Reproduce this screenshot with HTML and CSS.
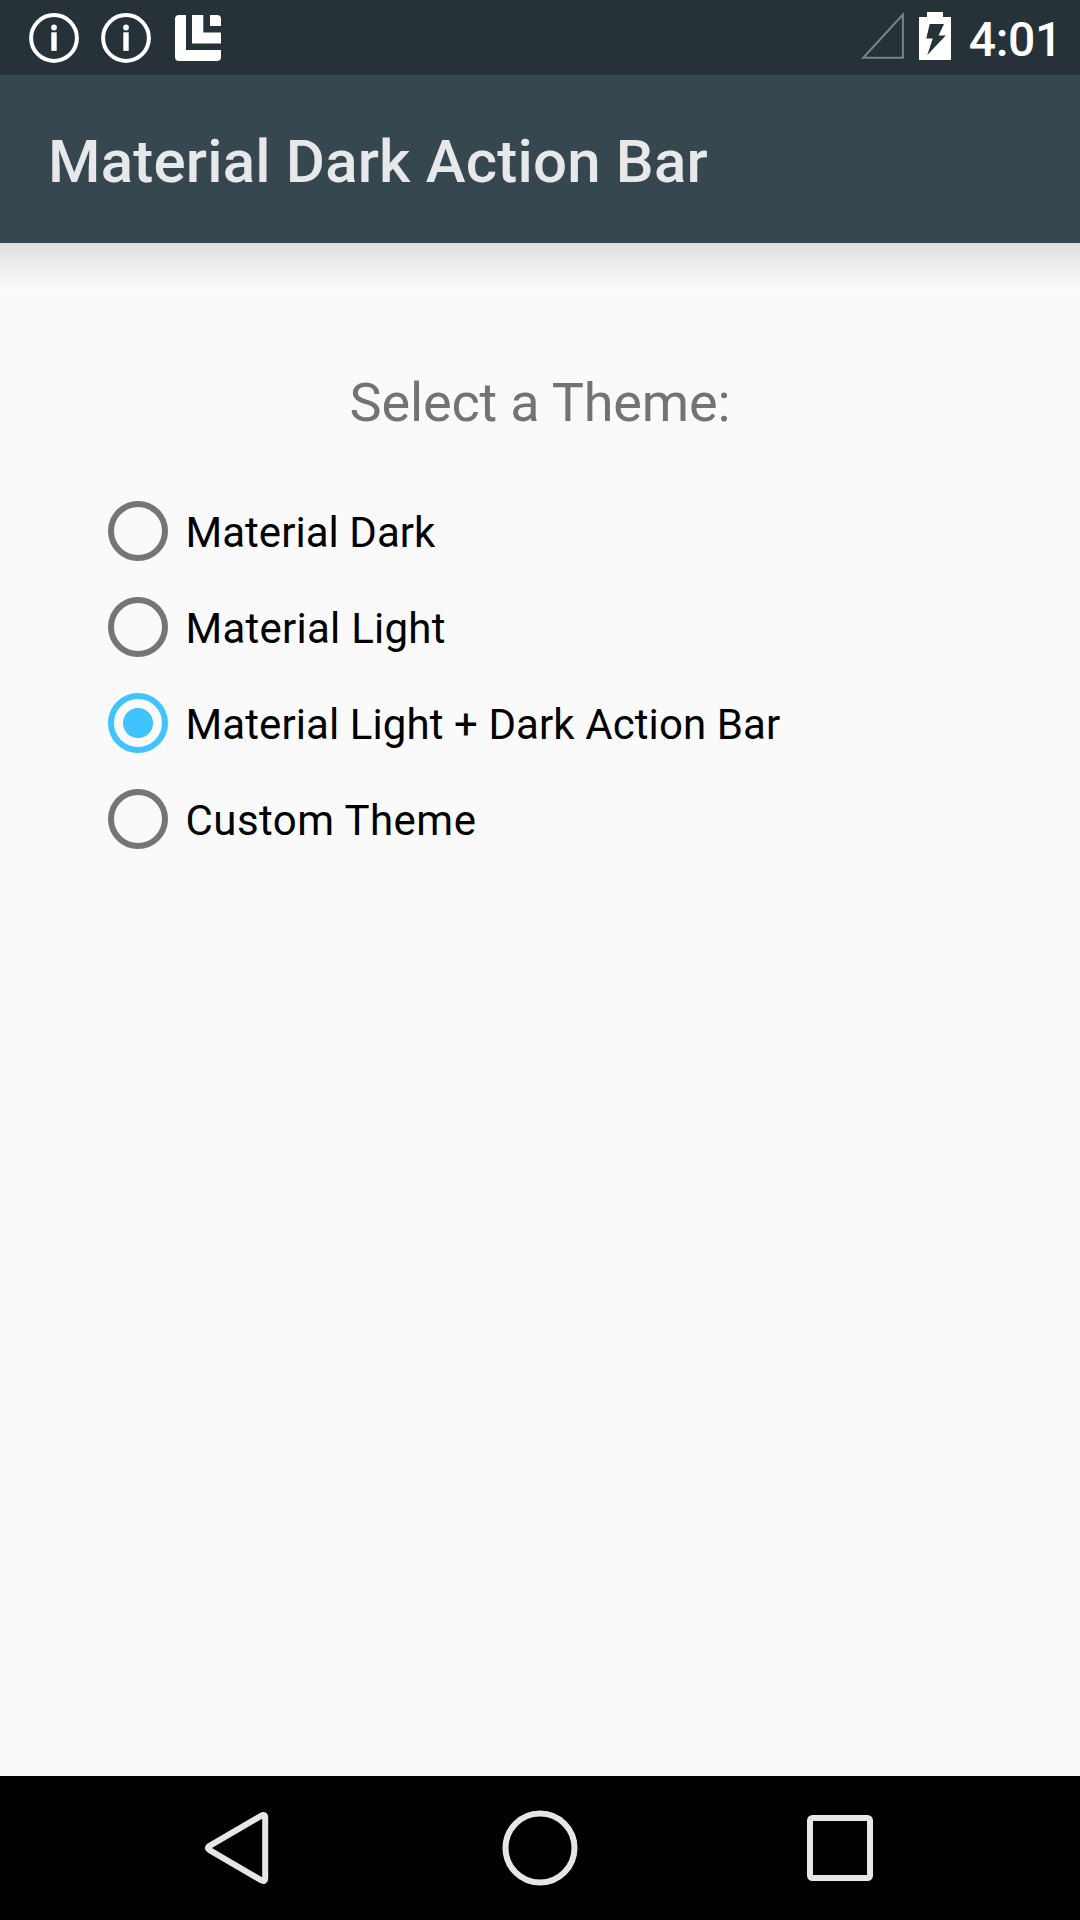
FILE: index.html
```html
<!DOCTYPE html>
<html lang="en">
<head>
<meta charset="utf-8">
<title>Material Dark Action Bar</title>
<link rel="stylesheet" href="styles.css">
</head>
<body>
<div class="screen">
  <header class="status-bar">
    <div class="notifications">
      <svg class="info-icon" viewBox="0 0 50 50"><circle cx="25" cy="25" r="22.9"/><circle class="solid" cx="25" cy="14.5" r="2.9"/><path class="solid" d="M22.3 19.3h5.4v18.6h-5.4z"/></svg>
      <svg class="info-icon" viewBox="0 0 50 50"><circle cx="25" cy="25" r="22.9"/><circle class="solid" cx="25" cy="14.5" r="2.9"/><path class="solid" d="M22.3 19.3h5.4v18.6h-5.4z"/></svg>
      <svg class="app-icon" viewBox="0 0 46 46"><path d="M4 0h7v35h35v7a4 4 0 0 1-4 4H4a4 4 0 0 1-4-4V4a4 4 0 0 1 4-4zM17 0h11.300v17.500H46v11H17zM35 0h7a4 4 0 0 1 4 4v7H35z"/></svg>
    </div>
    <div class="system">
      <svg class="signal-icon" viewBox="0 0 45 49"><path d="M42.900 3.500V46.700H3.200z"/></svg>
      <svg class="battery-icon" viewBox="0 0 32 48"><path fill-rule="evenodd" d="M8 0h16v5h8v43H0V5h8zM10.700 12 7.300 26.500h6.500L8.300 43 26.800 23.500h-7.300L25 12z"/></svg>
      <span class="clock">4:01</span>
    </div>
  </header>
  <div class="action-bar"><h1 class="title">Material Dark Action Bar</h1></div>
  <main class="content">
    <h2 class="prompt">Select a Theme:</h2>
    <div class="options">
      <label class="option"><input class="radio" type="radio" name="theme"><span class="label">Material Dark</span></label>
      <label class="option"><input class="radio" type="radio" name="theme"><span class="label label-light">Material Light</span></label>
      <label class="option"><input class="radio" type="radio" name="theme" checked><span class="label label-mixed">Material Light + Dark Action Bar</span></label>
      <label class="option"><input class="radio" type="radio" name="theme"><span class="label label-custom">Custom Theme</span></label>
    </div>
  </main>
  <nav class="nav-bar">
    <svg class="nav-icon" viewBox="0 0 84 84"><path d="M67.200 12V72Q67.200 76.500 63 74.200L12 44.300Q8 42 12 39.700L63 9.800Q67.200 7.500 67.200 12z"/></svg>
    <svg class="nav-icon" viewBox="0 0 84 84"><circle cx="42" cy="42" r="34.500"/></svg>
    <svg class="nav-icon" viewBox="0 0 84 84"><rect x="12" y="12" width="60" height="60" rx="2.500"/></svg>
  </nav>
</div>
</body>
</html>
```
FILE: styles.css
```css
* { box-sizing: border-box; }
body {
  margin: 0;
  font-family: Roboto, sans-serif;
  background: #fafafa;
}
.screen {
  width: 1080px;
  height: 1920px;
  display: flex;
  flex-direction: column;
  overflow: hidden;
}
svg { display: block; flex: none; }

.status-bar {
  height: 75px;
  flex: none;
  display: flex;
  justify-content: space-between;
  background: #263238;
}
.notifications {
  display: flex;
  gap: 22px;
  padding: 13px 0 0 29px;
}
.info-icon { width: 50px; height: 50px; fill: none; stroke: #fff; stroke-width: 4; }
.info-icon .solid { fill: #fff; stroke: none; }
.app-icon { width: 46px; height: 46px; margin: 2px 0 0 2px; fill: #fff; }
.system {
  display: flex;
  padding: 12px 18px 0 0;
}
.signal-icon { width: 45px; height: 49px; margin-top: -1px; fill: none; stroke: #7d8488; stroke-width: 2; }
.battery-icon { width: 32px; height: 48px; margin-left: 14px; fill: #fff; }
.clock {
  margin: 0 0 0 18px;
  font-size: 48px;
  line-height: 56px;
  font-weight: 500;
  letter-spacing: -0.3px;
  color: #fff;
}

.action-bar {
  height: 168px;
  flex: none;
  display: flex;
  align-items: center;
  padding: 5px 48px 0;
  background: #37474f;
}
.title {
  margin: 0;
  font-size: 60px;
  line-height: 70px;
  font-weight: 500;
  letter-spacing: 0.2px;
  color: #e6e8ea;
  white-space: nowrap;
}

.content {
  flex: 1;
  padding: 128px 108px 0;
  background: linear-gradient(#dfdfdf 0, #e9e9e9 16px, #f1f1f1 31px, #f9f9f9 42px, #fafafa 50px);
}
.prompt {
  margin: 0;
  font-size: 54px;
  line-height: 64px;
  font-weight: 400;
  letter-spacing: -0.15px;
  text-align: center;
  color: #737373;
}
.options { margin-top: 48px; }
.option {
  height: 96px;
  display: flex;
  align-items: center;
  gap: 17.500px;
}
.radio {
  appearance: none;
  flex: none;
  width: 60px;
  height: 60px;
  margin: 0;
  border: 6px solid #757575;
  border-radius: 50%;
}
.radio:checked {
  border-color: #40c4ff;
  background: radial-gradient(circle, #40c4ff 14.600px, transparent 15.400px);
}
.label {
  padding-top: 3px;
  font-size: 42px;
  line-height: 50px;
  letter-spacing: 0.04px;
  color: #000;
}
.label-light { letter-spacing: 0.25px; }
.label-mixed { letter-spacing: 0.09px; }
.label-custom { letter-spacing: 0.45px; }

.nav-bar {
  height: 144px;
  flex: none;
  display: flex;
  justify-content: center;
  align-items: center;
  gap: 216px;
  background: #000;
}
.nav-icon { width: 84px; height: 84px; fill: none; stroke: #e6e6e6; stroke-width: 6; }
```
